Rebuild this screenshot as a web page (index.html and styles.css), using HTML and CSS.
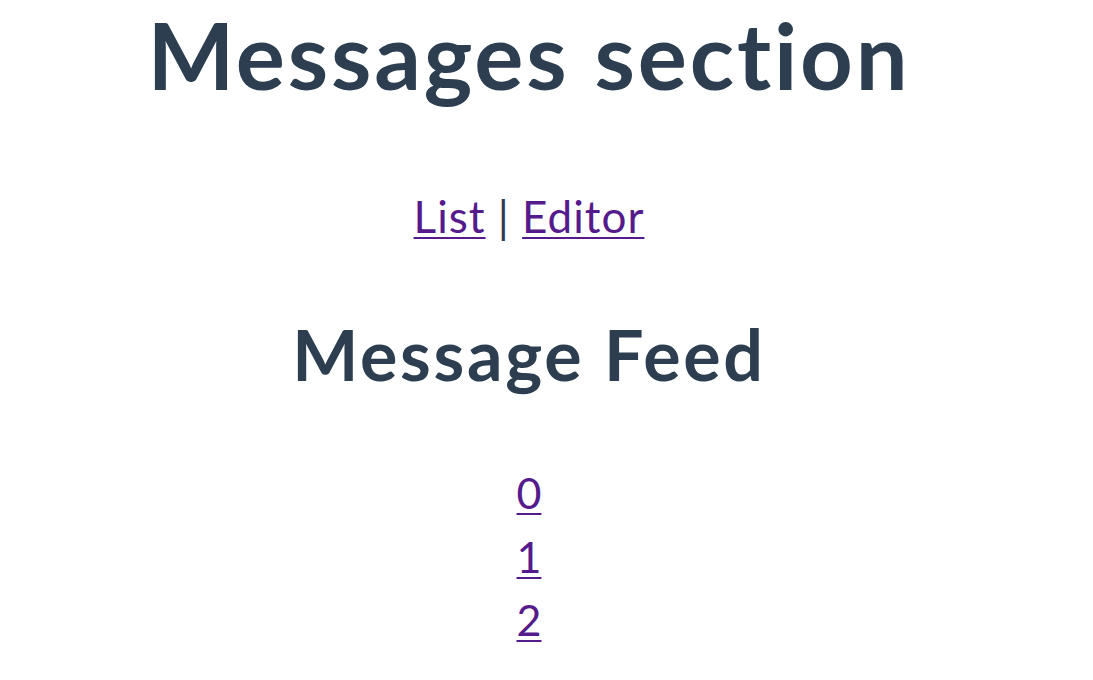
FILE: index.html
```html
<!DOCTYPE html>
<html>
<head>
<meta charset="utf-8">
<link rel="stylesheet" href="styles.css">
</head>
<body>
<div class="app">
  <h1 class="title">Messages section</h1>
  <nav class="nav"><a href="#list">List</a> | <a href="#editor">Editor</a></nav>
  <h2 class="feed-title">Message Feed</h2>
  <div class="feed">
    <div class="item"><a href="#0">0</a></div>
    <div class="item"><a href="#1">1</a></div>
    <div class="item"><a href="#2">2</a></div>
  </div>
</div>
</body>
</html>
```
FILE: styles.css
```css
body {
  margin: 0;
  background: #ffffff;
  font-family: Lato, "Noto Sans", sans-serif;
  color: #2c3e50;
  font-variant-ligatures: none;
}
.app {
  width: 1058px;
  text-align: center;
}
.title {
  margin: 0;
  font-size: 92px;
  line-height: 1.2;
  font-weight: 700;
  letter-spacing: 2.8px;
}
.nav {
  margin-top: 76px;
  font-size: 44px;
  line-height: 60px;
  letter-spacing: 1px;
}
.nav a, .feed a {
  color: #551a8b;
  text-decoration-thickness: 2px;
  text-underline-offset: 4px;
}
.feed-title {
  margin: 66px 0 0;
  font-size: 70px;
  line-height: 84px;
  font-weight: 700;
  letter-spacing: 2.7px;
}
.feed {
  margin-top: 65px;
  font-size: 43px;
  line-height: 63.5px;
}
```
